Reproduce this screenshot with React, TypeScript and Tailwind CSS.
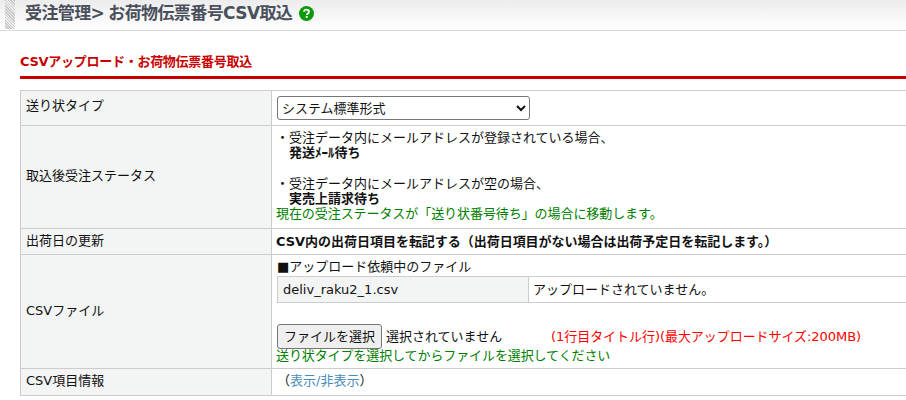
import type { ReactNode } from 'react'

const labelCell = 'border border-[#ccc] bg-[#f3f4f4] px-[5px] align-middle font-normal text-left'
const valueCell = 'border border-[#ccc] bg-white pl-[4px] align-top'

function Row({ label, height, children }: { label: string; height: string; children: ReactNode }) {
  return (
    <tr className={height}>
      <th className={labelCell}><div className="-mt-[3px]">{label}</div></th>
      <td className={valueCell}>{children}</td>
    </tr>
  )
}

export default function App() {
  return (
    <div className="h-[400px] w-[906px] overflow-hidden bg-white text-[13px] leading-[15px] text-[#111] [font-family:'DejaVu_Sans','Noto_Sans_CJK_JP',sans-serif]">
      <div className="flex h-[31px] items-center border-b border-[#d8d8e0] bg-gradient-to-b from-[#ececec] to-white">
        <div className="ml-[5px] h-[29px] w-[10px] self-start bg-[repeating-linear-gradient(45deg,#c8c8c8_0,#c8c8c8_1px,#eee_1px,#eee_2px)]" />
        <h1 className="-mt-[4px] ml-[10px] text-[17px] leading-[22px] font-bold tracking-[-0.6px] text-[#4a4f5c]">受注管理&gt;<span className="ml-[4px]">お荷物伝票番号CSV取込</span></h1>
        <svg className="-mt-[3px] ml-[7px] h-[15px] w-[15px]" viewBox="0 0 16 16">
          <circle cx="8" cy="8" r="8" fill="#0a9a0a" />
          <path d="M5.4 6.2C5.5 4.6 6.6 3.8 8 3.8c1.5 0 2.6.9 2.6 2.2 0 1.9-2.2 1.9-2.2 3.6" fill="none" stroke="#fff" strokeWidth="2" />
          <rect x="7.1" y="10.6" width="2.2" height="2" fill="#fff" />
        </svg>
      </div>

      <div className="pl-[20px]">
        <h2 className="mt-[23px] h-[22px] text-[13px] font-bold leading-[16px] tracking-[-0.28px] text-[#c80000]">CSVアップロード・お荷物伝票番号取込</h2>
        <div className="h-[3px] bg-[#c80000]" />

        <table className="mt-[11px] w-[1000px] table-fixed border-collapse">
          <colgroup>
            <col className="w-[251px]" />
            <col />
          </colgroup>
          <tbody>
            <tr className="h-[35px]">
              <th className={`${labelCell} !align-top pt-[7px]`}>送り状タイプ</th>
              <td className={`${valueCell} pt-[5px]`}>
                <select className="ml-[1px] h-[24px] w-[253px] rounded-[3px] border border-[#767676] bg-white text-[13px]">
                  <option>システム標準形式</option>
                </select>
              </td>
            </tr>
            <Row label="取込後受注ステータス" height="h-[103px]">
              <div className="pt-[4px] pb-[6px]">
                <div>・受注データ内にメールアドレスが登録されている場合、</div>
                <div className="pl-[13px] font-bold">発送ﾒｰﾙ待ち</div>
                <div className="h-[16px]" />
                <div>・受注データ内にメールアドレスが空の場合、</div>
                <div className="pl-[13px] font-bold">実売上請求待ち</div>
                <div className="tracking-[-0.07px] text-[#008000]">現在の受注ステータスが「送り状番号待ち」の場合に移動します。</div>
              </div>
            </Row>
            <Row label="出荷日の更新" height="h-[26px]">
              <div className="pt-[5px] font-bold tracking-[-0.03px]">CSV内の出荷日項目を転記する（出荷日項目がない場合は出荷予定日を転記します。）</div>
            </Row>
            <Row label="CSVファイル" height="h-[114px]">
              <div className="pt-[4px] pl-[1px]">■アップロード依頼中のファイル</div>
              <table className="mt-[2px] ml-[1px] w-[800px] table-fixed border-collapse">
                <tbody>
                  <tr className="h-[26px]">
                    <td className="w-[251px] border border-[#ccc] bg-[#f3f4f4] pl-[5px]">deliv_raku2_1.csv</td>
                    <td className="border border-[#ccc] pl-[4px]">アップロードされていません。</td>
                  </tr>
                </tbody>
              </table>
              <div className="mt-[21px] flex h-[25px] items-center pl-[1px]">
                <button className="h-[25px] w-[105px] rounded-[3px] border border-[#767676] bg-[#efefef] text-[13px]">ファイルを選択</button>
                <span className="ml-[4px] w-[165px]">選択されていません</span>
                <span className="tracking-[-0.05px] text-[#ff0000]">(1行目タイトル行)(最大アップロードサイズ:200MB)</span>
              </div>
              <div className="-mt-[1px] tracking-[-0.1px] text-[#008000]">送り状タイプを選択してからファイルを選択してください</div>
            </Row>
            <Row label="CSV項目情報" height="h-[27px]">
              <div className="pt-[4px] pl-[1px]">（<a className="text-[#4a8db8]">表示/非表示</a>）</div>
            </Row>
          </tbody>
        </table>
      </div>
    </div>
  )
}
